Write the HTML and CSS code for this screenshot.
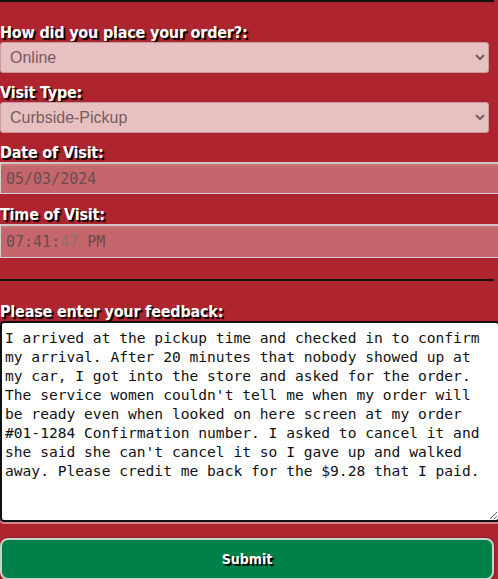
FILE: index.html
```html
<!DOCTYPE html>
<html>
<head>
<meta charset="utf-8">
<link rel="stylesheet" href="styles.css">
</head>
<body>
<form class="form">
  <label class="label first">How did you place your order?:</label>
  <select class="select"><option>Online</option></select>

  <label class="label">Visit Type:</label>
  <select class="select"><option>Curbside-Pickup</option></select>

  <label class="label">Date of Visit:</label>
  <div class="field date"><span>05/03/2024</span></div>

  <label class="label gap11">Time of Visit:</label>
  <div class="field time"><span>07:41:<span class="faint">47</span> PM</span></div>

  <hr class="rule">

  <label class="label after-rule">Please enter your feedback:</label>
  <textarea class="feedback">I arrived at the pickup time and checked in to confirm my arrival. After 20 minutes that nobody showed up at my car, I got into the store and asked for the order. The service women couldn't tell me when my order will be ready even when looked on here screen at my order #01-1284 Confirmation number. I asked to cancel it and she said she can't cancel it so I gave up and walked away. Please credit me back for the $9.28 that I paid.</textarea>

  <button type="button" class="submit">Submit</button>
</form>
</body>
</html>
```
FILE: styles.css
```css
html, body {
  margin: 0;
  padding: 0;
  background: #af252f;
  overflow: hidden;
  height: 579px;
}
.form {
  width: 494px;
  border-top: 2px solid #111;
  display: flex;
  flex-direction: column;
  align-items: flex-start;
}
.label {
  display: block;
  font-family: "DejaVu Sans Condensed", "DejaVu Sans", sans-serif;
  font-weight: bold;
  font-size: 16px;
  line-height: 19px;
  color: #fff;
  text-shadow: 2px 2px 1px #000;
  margin-top: 10px;
  letter-spacing: -0.2px;
}
.label.first { margin-top: 21px; }
.label.gap11 { margin-top: 11px; }
.label.after-rule { margin-top: 21px; }
.select {
  box-sizing: border-box;
  width: 489px;
  height: 31px;
  margin: 0;
  padding: 0 5px;
  background-color: #e7c0c2;
  color: #7b5b5e;
  border: 1px solid #c99a9d;
  border-radius: 3px;
  font-family: "Liberation Sans", Arial, sans-serif;
  font-size: 16px;
}
.field {
  box-sizing: border-box;
  width: 510px;
  height: 32px;
  background: #c4666b;
  border: 1px solid #d2d2d2;
  border-top: 2px solid #d0c4c4;
  box-shadow: inset 0 2px 2px rgba(255,255,255,0.12);
  font-family: "DejaVu Sans Mono", monospace;
  font-size: 15px;
  color: #6a4c4f;
  padding: 0 0 0 5px;
  display: flex;
  align-items: center;
  white-space: pre;
}
.field.time { height: 34px; }
.faint { color: #8a7173; }
.rule {
  width: 494px;
  margin: 21px 0 0 0;
  border: 0;
  border-top: 2px solid #111;
  height: 0;
}
.feedback {
  box-sizing: border-box;
  width: 500px;
  height: 201px;
  margin: 0;
  padding: 5px 3px 3px 3px;
  border: 2px solid #111;
  border-radius: 4px;
  background: #fff;
  color: #111;
  font-family: "DejaVu Sans Mono", monospace;
  font-size: 14.6px;
  line-height: 19px;
  resize: both;
  box-shadow: 0 2px 0 rgba(255,255,255,0.45);
}
.submit {
  box-sizing: border-box;
  width: 494px;
  height: 42px;
  margin-top: 16px;
  background: #008149;
  border: 2px solid #c9d3cd;
  border-radius: 8px;
  box-shadow: 0 0 3px rgba(0,0,0,0.35);
  color: #fff;
  font-family: "DejaVu Sans Condensed", "DejaVu Sans", sans-serif;
  font-weight: bold;
  font-size: 14px;
  text-shadow: 2px 2px 1px #000;
}
```
